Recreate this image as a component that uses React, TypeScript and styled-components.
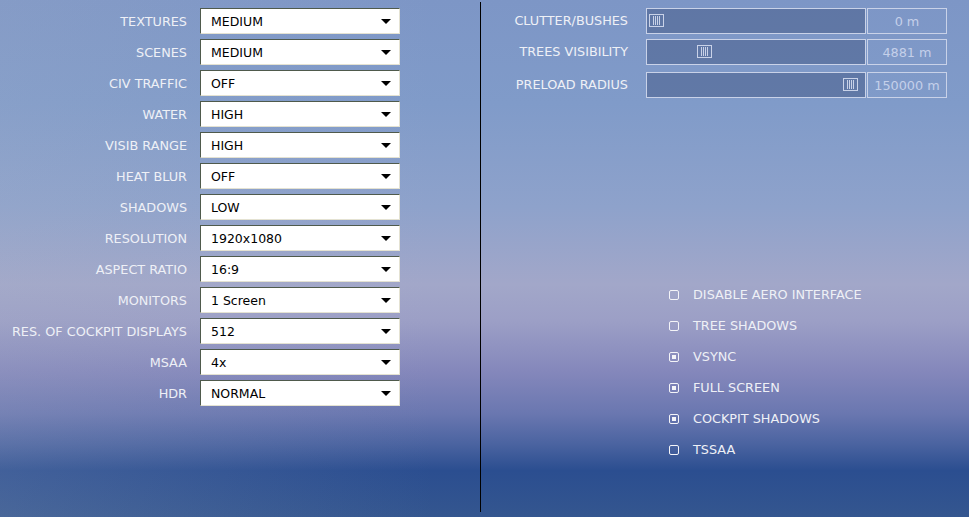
import styled, { createGlobalStyle } from 'styled-components';

const GlobalStyle = createGlobalStyle`
  html, body {
    margin: 0;
    padding: 0;
  }
  body {
    font-family: "DejaVu Sans", "Liberation Sans", sans-serif;
    font-size: 12.8px;
  }
`;

const Screen = styled.div`
  width: 969px;
  height: 517px;
  overflow: hidden;
  display: flex;
  background:
    linear-gradient(90deg, rgba(170, 180, 200, 0.18) 0%, rgba(170, 180, 200, 0) 45%),
    linear-gradient(
      180deg,
      #7d96c6 0%,
      #809bc9 20%,
      #8ea2cb 40%,
      #a2a7c9 55%,
      #9c9fc6 62%,
      #8487bb 72%,
      #6a77b0 80%,
      #4a63a0 86%,
      #2b4e90 91%,
      #34568f 100%
    );
`;

const LeftPanel = styled.div`
  width: 480px;
  padding-top: 8px;
  display: flex;
  flex-direction: column;
  gap: 5px;
  box-sizing: border-box;
`;

const Divider = styled.div`
  width: 1px;
  margin: 2px 0 5px;
  background: #000;
`;

const RightPanel = styled.div`
  flex: 1;
  padding-top: 8px;
  display: flex;
  flex-direction: column;
`;

const OptionRow = styled.div`
  display: flex;
  align-items: center;
  height: 26px;
  gap: 13px;
`;

const OptionLabel = styled.div`
  width: 187px;
  text-align: right;
  color: #eef0f6;
  white-space: nowrap;
`;

const Select = styled.div`
  width: 200px;
  height: 26px;
  box-sizing: border-box;
  background: #fff;
  border: 1px solid;
  border-color: #4f5a4c #e4e2d2 #e4e2d2 #4f5a4c;
  display: flex;
  align-items: center;
  padding: 0 4px 0 10px;
  color: #000;
  font-size: 12.5px;
`;

const SelectText = styled.span`
  flex: 1;
`;

const Arrow = styled.span`
  width: 0;
  height: 0;
  border-left: 5px solid transparent;
  border-right: 5px solid transparent;
  border-top: 5px solid #000;
  margin-right: 4px;
`;

const SliderRow = styled.div<{ $shift?: number }>`
  display: flex;
  align-items: flex-start;
  height: 26px;
  margin-top: ${(p) => p.$shift ?? 0}px;
`;

const SliderLabel = styled.div`
  width: 147px;
  text-align: right;
  color: #eef0f6;
  line-height: 25px;
  white-space: nowrap;
  margin-right: 18px;
`;

const Track = styled.div`
  position: relative;
  width: 220px;
  height: 26px;
  box-sizing: border-box;
  border: 1px solid #c9d2e8;
  background: rgba(60, 80, 125, 0.45);
`;

const Thumb = styled.div`
  position: absolute;
  top: 5px;
  width: 15px;
  height: 13px;
  box-sizing: border-box;
  border: 1px solid #c9d2e8;
  display: flex;
  justify-content: center;
  align-items: center;
  gap: 1px;
`;

const ThumbLine = styled.span`
  width: 1px;
  height: 9px;
  background: #c9d2e8;
`;

const ValueBox = styled.div`
  width: 80px;
  height: 26px;
  margin-left: 1px;
  box-sizing: border-box;
  border: 1px solid #c9d2e8;
  color: #c5d0ea;
  display: flex;
  align-items: center;
  justify-content: center;
`;

const CheckList = styled.div`
  margin-top: 181px;
  padding-left: 188px;
  display: flex;
  flex-direction: column;
`;

const CheckRow = styled.div`
  display: flex;
  align-items: center;
  height: 31px;
  gap: 14px;
  color: #eef0f6;
`;

const Box = styled.span<{ $on?: boolean }>`
  width: 10px;
  height: 10px;
  box-sizing: border-box;
  border: 1.5px solid #f4f4f8;
  border-radius: 2px;
  display: flex;
  align-items: center;
  justify-content: center;
  &::after {
    content: '';
    display: ${(p) => (p.$on ? 'block' : 'none')};
    width: 4px;
    height: 4px;
    background: #f4f4f8;
  }
`;

const options = [
  ['TEXTURES', 'MEDIUM'],
  ['SCENES', 'MEDIUM'],
  ['CIV TRAFFIC', 'OFF'],
  ['WATER', 'HIGH'],
  ['VISIB RANGE', 'HIGH'],
  ['HEAT BLUR', 'OFF'],
  ['SHADOWS', 'LOW'],
  ['RESOLUTION', '1920x1080'],
  ['ASPECT RATIO', '16:9'],
  ['MONITORS', '1 Screen'],
  ['RES. OF COCKPIT DISPLAYS', '512'],
  ['MSAA', '4x'],
  ['HDR', 'NORMAL'],
];

const sliders = [
  { label: 'CLUTTER/BUSHES', value: '0 m', ratio: 0, shift: 0 },
  { label: 'TREES VISIBILITY', value: '4881 m', ratio: 0.249, shift: 5 },
  { label: 'PRELOAD RADIUS', value: '150000 m', ratio: 1, shift: 7 },
];

const checks = [
  ['DISABLE AERO INTERFACE', false],
  ['TREE SHADOWS', false],
  ['VSYNC', true],
  ['FULL SCREEN', true],
  ['COCKPIT SHADOWS', true],
  ['TSSAA', false],
] as const;

export default function App() {
  return (
    <>
      <GlobalStyle />
      <Screen>
        <LeftPanel>
          {options.map(([label, value]) => (
            <OptionRow key={label}>
              <OptionLabel>{label}</OptionLabel>
              <Select>
                <SelectText>{value}</SelectText>
                <Arrow />
              </Select>
            </OptionRow>
          ))}
        </LeftPanel>
        <Divider />
        <RightPanel>
          {sliders.map((s) => (
            <SliderRow key={s.label} $shift={s.shift}>
              <SliderLabel>{s.label}</SliderLabel>
              <Track>
                <Thumb style={{ left: 2 + s.ratio * 194 }}>
                  <ThumbLine />
                  <ThumbLine />
                  <ThumbLine />
                  <ThumbLine />
                </Thumb>
              </Track>
              <ValueBox>{s.value}</ValueBox>
            </SliderRow>
          ))}
          <CheckList>
            {checks.map(([label, on]) => (
              <CheckRow key={label}>
                <Box $on={on} />
                {label}
              </CheckRow>
            ))}
          </CheckList>
        </RightPanel>
      </Screen>
    </>
  );
}
